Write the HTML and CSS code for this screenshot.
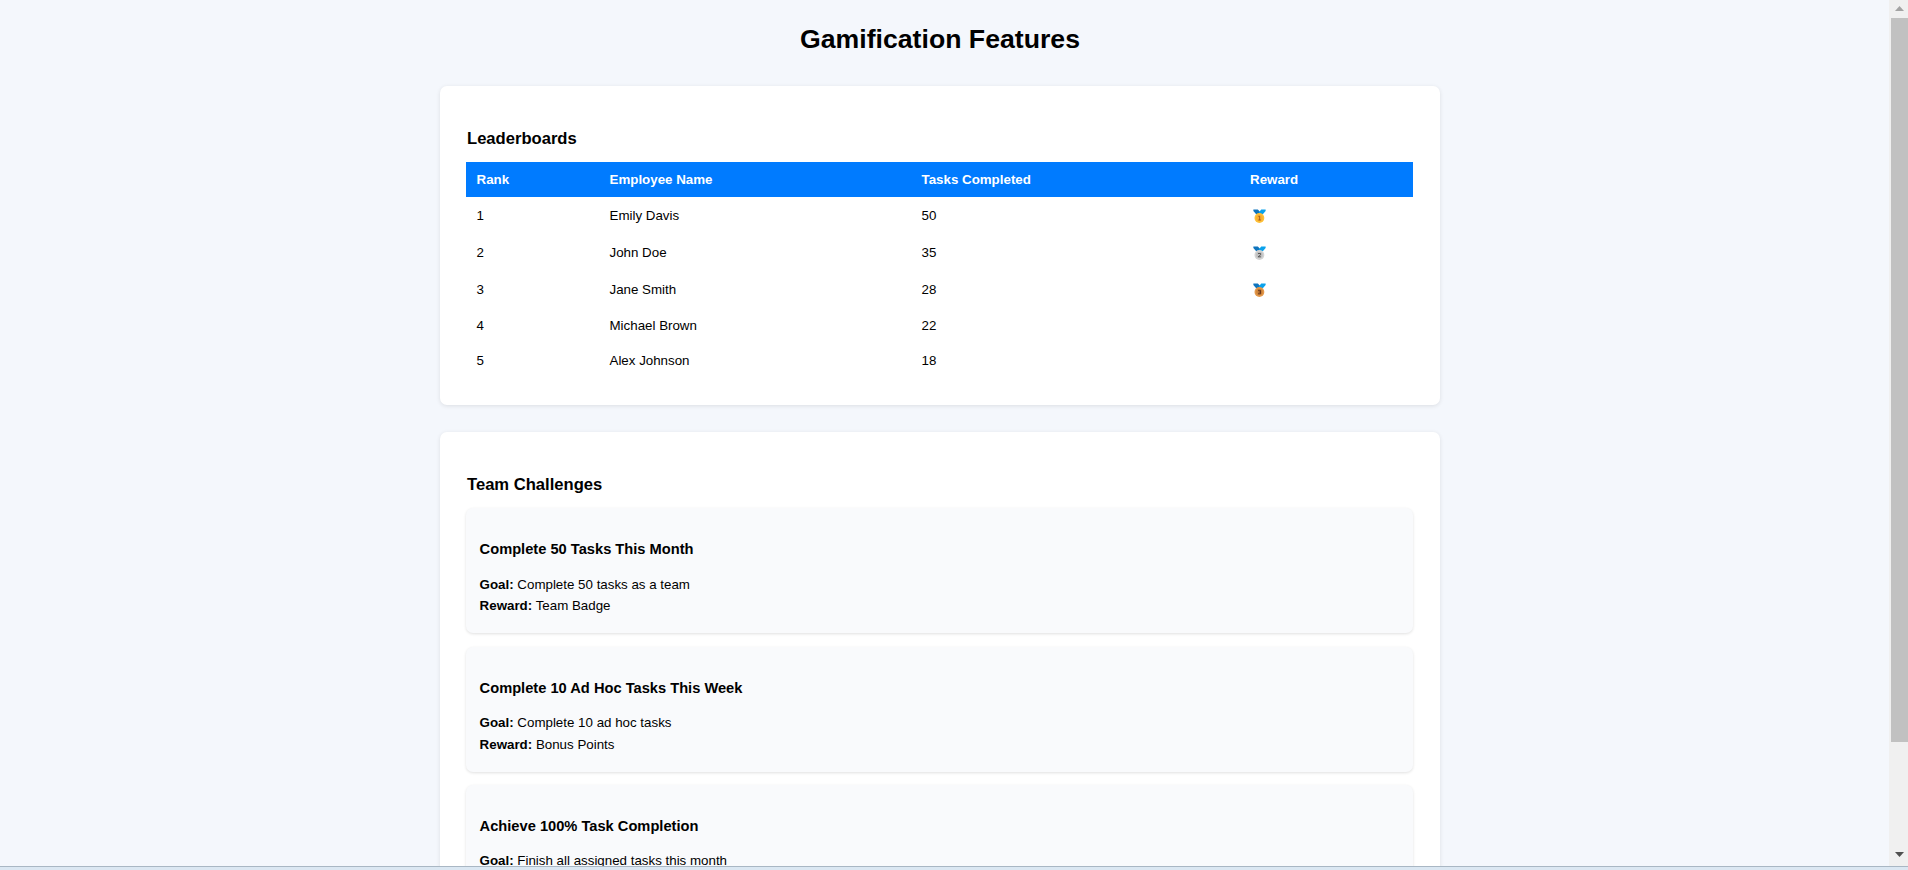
FILE: index.html
```
<!DOCTYPE html>
<html lang="en">
<head>
<meta charset="utf-8">
<title>Gamification Features</title>
<link rel="stylesheet" href="styles.css">
</head>
<body>
<svg class="defs" aria-hidden="true">
  <symbol id="ribbon" viewBox="0 0 13 14">
    <path d="M.4.6h4.4L7 2.8 6.4 5.2H3.2L.4 2z" fill="#0f74bd"/>
    <path d="M12.6.6H8.2L5.8 3.4l.4 1.8h3.6L12.6 2z" fill="#0ba2ec"/>
  </symbol>
</svg>
<div class="window">
  <div class="viewport">
    <main class="page">
      <h1 class="title">Gamification Features</h1>
      <section class="panel leaderboard">
        <h2 class="heading">Leaderboards</h2>
        <table class="table">
          <colgroup><col class="c-rank"><col class="c-name"><col class="c-tasks"><col></colgroup>
          <thead><tr><th>Rank</th><th>Employee Name</th><th>Tasks Completed</th><th>Reward</th></tr></thead>
          <tbody>
            <tr class="tall"><td>1</td><td>Emily Davis</td><td>50</td><td><svg class="medal" viewBox="0 0 13 14"><use href="#ribbon"/><circle cx="6.4" cy="9" r="4.9" fill="#fdc038"/><circle cx="6.4" cy="9" r="3.3" fill="#f9ae30"/><path d="M5.4 7.3h1.3v3.6M5.4 11h2.4" class="digit gold"/></svg></td></tr>
            <tr class="tall"><td>2</td><td>John Doe</td><td>35</td><td><svg class="medal" viewBox="0 0 13 14"><use href="#ribbon"/><circle cx="6.4" cy="9" r="4.9" fill="#d3d3d3"/><circle cx="6.4" cy="9" r="3.3" fill="#bfbfbf"/><path d="M5 7.5h2.6v1.3L5.2 10.8h2.7" class="digit silver"/></svg></td></tr>
            <tr class="tall"><td>3</td><td>Jane Smith</td><td>28</td><td><svg class="medal" viewBox="0 0 13 14"><use href="#ribbon"/><circle cx="6.4" cy="9" r="4.9" fill="#e3984a"/><circle cx="6.4" cy="9" r="3.3" fill="#cf853b"/><path d="M5 7.3h2.6v3.5H5M5.6 9h2" class="digit bronze"/></svg></td></tr>
            <tr class="short"><td>4</td><td>Michael Brown</td><td>22</td><td></td></tr>
            <tr class="short"><td>5</td><td>Alex Johnson</td><td>18</td><td></td></tr>
          </tbody>
        </table>
      </section>
      <section class="panel challenges">
        <h2 class="heading">Team Challenges</h2>
        <article class="challenge">
          <h3 class="name">Complete 50 Tasks This Month</h3>
          <p class="line"><strong>Goal:</strong> Complete 50 tasks as a team</p>
          <p class="line"><strong>Reward:</strong> Team Badge</p>
        </article>
        <article class="challenge">
          <h3 class="name">Complete 10 Ad Hoc Tasks This Week</h3>
          <p class="line"><strong>Goal:</strong> Complete 10 ad hoc tasks</p>
          <p class="line"><strong>Reward:</strong> Bonus Points</p>
        </article>
        <article class="challenge">
          <h3 class="name">Achieve 100% Task Completion</h3>
          <p class="line"><strong>Goal:</strong> Finish all assigned tasks this month</p>
        </article>
      </section>
    </main>
    <div class="scrollbar">
      <svg class="arrow" viewBox="0 0 19 18"><path d="M6 11l4.5-5 4.5 5z" fill="#a3a3a3"/></svg>
      <div class="thumb"></div>
      <svg class="arrow down" viewBox="0 0 19 18"><path d="M6 4l4.5 5L15 4z" fill="#505050"/></svg>
    </div>
  </div>
  <div class="edge"></div>
</div>
</body>
</html>
```
FILE: styles.css
```
* { box-sizing: border-box; }
body {
  margin: 0;
  overflow: hidden;
  background: #f4f7fc;
  color: #000;
  font: 13.33px/21.33px "Liberation Sans", Arial, sans-serif;
}
.defs { display: none; }
.window { display: flex; flex-direction: column; height: 870px; }
.viewport { display: flex; height: 866px; overflow: hidden; }
.page { flex: 1; height: 866px; overflow: hidden; padding-left: 440px; }
.title {
  width: 1000px;
  height: 86px;
  margin: 0;
  padding-top: 17px;
  font-size: 26.67px;
  line-height: 44px;
  text-align: center;
}
.panel {
  width: 1000px;
  padding: 41px 27px 0 26px;
  background: #fff;
  border-radius: 7px;
  box-shadow: 0 1px 4px rgba(0, 0, 0, .1);
}
.leaderboard { height: 319px; margin-bottom: 27px; }
.challenges { height: 460px; }
.heading { height: 35px; margin: 0; padding-left: 1px; font-size: 16.6px; line-height: 24px; }
.table { width: 947px; table-layout: fixed; border-collapse: collapse; }
.c-rank { width: 133px; }
.c-name { width: 312px; }
.c-tasks { width: 328.5px; }
.table th, .table td { padding: 0 10.5px; text-align: left; vertical-align: middle; line-height: 21px; }
.table th { height: 35px; background: #007bff; color: #fff; }
.tall { height: 37px; }
.short { height: 35px; }
.medal { display: block; width: 13px; height: 14px; margin-left: 2.5px; }
.digit { fill: none; stroke-width: .8; }
.gold { stroke: #8a4a16; }
.silver { stroke: #444; }
.bronze { stroke: #4a2014; }
.challenge {
  height: 125px;
  margin-bottom: 13.6px;
  padding: 29px 13.6px 0;
  background: #f9fafc;
  border-radius: 7px;
  box-shadow: 0 1px 3px rgba(0, 0, 0, .12);
}
.name { margin: 0 0 12.7px; font-size: 14.67px; line-height: 24px; }
.challenge:last-child .name { margin-bottom: 11.5px; }
.line { margin: 0; }
.scrollbar { display: flex; flex-direction: column; width: 19px; height: 866px; background: #f0f0f0; }
.arrow { width: 19px; height: 18px; flex: none; }
.thumb { width: 17px; height: 724px; margin-left: 2px; background: #c1c1c1; }
.down { margin-top: auto; }
.edge { height: 4px; border-top: 1px solid #a9b7c4; background: #dbe7f2; }
```
